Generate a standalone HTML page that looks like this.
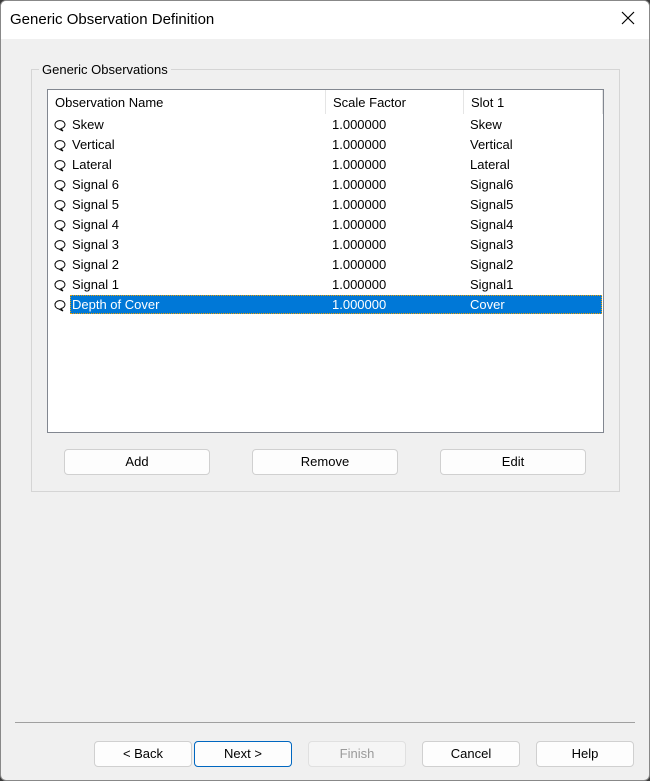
<!DOCTYPE html><html><head><style>
body{margin:0;width:650px;height:781px;background:#3a3a3a;font-family:"Liberation Sans",sans-serif;font-size:13px;color:#000;overflow:hidden;position:relative}
.win{position:absolute;left:0;top:0;width:648px;height:779px;border:1px solid #888;border-radius:6px;background:#f0f0f0;overflow:hidden}
.title{position:absolute;left:0;top:0;width:648px;height:38px;background:#fff}
.title span{position:absolute;left:9px;top:10px;font-size:15px}
.x{position:absolute;left:620px;top:10px}
.a{position:absolute}
.grp{left:30px;top:68px;width:587px;height:421px;border:1px solid #d5d5d5}
.gl{left:38px;top:61px;background:#f0f0f0;padding:0 3px}
.list{left:46px;top:88px;width:555px;height:342px;border:1px solid #828790;background:#fff}
.hd{position:absolute;top:0;height:24px;line-height:25px;padding-left:7px;border-right:1px solid #e5e5e5;box-sizing:border-box}
.row{position:absolute;left:0;height:20px;line-height:20px;width:555px}
.row span{position:absolute}
.btn{position:absolute;height:24px;border:1px solid #d0d0d0;border-radius:4px;background:#fdfdfd;text-align:center;line-height:24px}
.ic{position:absolute;left:5px;top:4px}
</style></head><body><div class="win">
<div class="title"><span>Generic Observation Definition</span>
<svg class="x" width="14" height="14" viewBox="0 0 14 14"><path d="M1 1L13 13M13 1L1 13" stroke="#000" stroke-width="1.2"/></svg></div>
<div class="a grp"></div><div class="a gl">Generic Observations</div>
<div class="a list">
<div class="hd" style="left:0;width:278px">Observation Name</div>
<div class="hd" style="left:278px;width:138px">Scale Factor</div>
<div class="hd" style="left:416px;width:139px">Slot 1</div>
<div id="rows"></div>
</div>
<div class="btn" style="left:63px;top:448px;width:144px">Add</div>
<div class="btn" style="left:251px;top:448px;width:144px">Remove</div>
<div class="btn" style="left:439px;top:448px;width:144px">Edit</div>
<div class="a" style="left:14px;top:721px;width:620px;height:1px;background:#a0a0a0"></div>
<div class="btn" style="left:93px;top:740px;width:96px">&lt; Back</div>
<div class="btn" style="left:193px;top:740px;width:96px;border-color:#0067c0">Next &gt;</div>
<div class="btn" style="left:307px;top:740px;width:96px;color:#9a9a9a;background:#f5f5f5;border-color:#e0e0e0">Finish</div>
<div class="btn" style="left:421px;top:740px;width:96px">Cancel</div>
<div class="btn" style="left:535px;top:740px;width:96px">Help</div>
</div>
<script>
var d=[["Skew","Skew"],["Vertical","Vertical"],["Lateral","Lateral"],["Signal 6","Signal6"],["Signal 5","Signal5"],["Signal 4","Signal4"],["Signal 3","Signal3"],["Signal 2","Signal2"],["Signal 1","Signal1"],["Depth of Cover","Cover"]],h="";
d.forEach(function(r,i){var sel=i==9;h+='<div class="row" style="top:'+(25+i*20)+'px">'+(sel?'<div style="position:absolute;left:22px;top:0;width:532px;height:19px;background:#0078d7;outline:1px dotted #f0a000;outline-offset:-1px"></div>':'')+
'<svg class="ic" width="14" height="13" viewBox="0 0 14 13"><path d="M2 6a5 4 0 1 1 6 3.5L10 12L6 10A5 4 0 0 1 2 6Z" fill="none" stroke="#000" stroke-width="1"/></svg>'+
'<span style="left:24px;'+(sel?'color:#fff':'')+'">'+r[0]+'</span><span style="left:284px;'+(sel?'color:#fff':'')+'">1.000000</span><span style="left:422px;'+(sel?'color:#fff':'')+'">'+r[1]+'</span></div>'});
document.getElementById("rows").innerHTML=h;
</script></body></html>
